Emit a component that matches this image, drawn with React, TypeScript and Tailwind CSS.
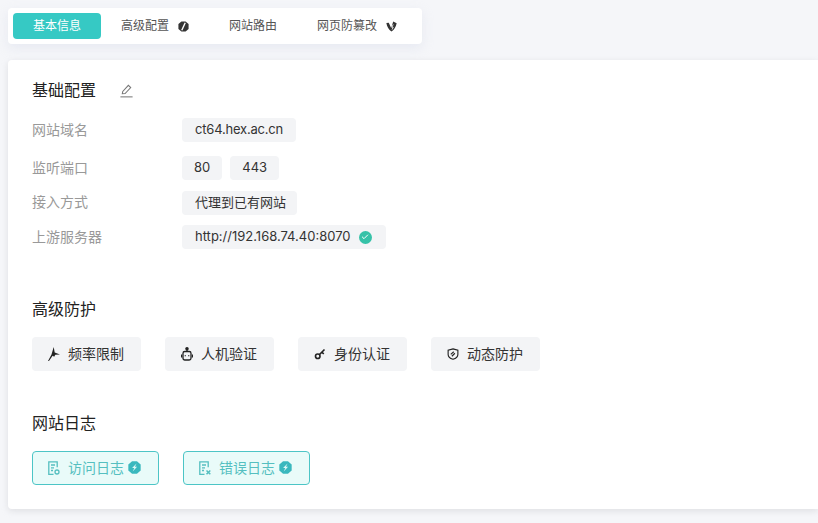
import React from "react";
import {Check} from "lucide-react";

const FONT = "font-['Inter','Noto_Sans_CJK_SC',sans-serif]";

const Bolt = ({className = ""}: {className?: string}) => (
  <svg viewBox="0 0 16 16" className={className} fill="currentColor">
    <path d="M5 .4h6L15.600 4.200v7.600L11 15.600H5L.4 11.800V4.200z" />
    <path d="M10.500 3 5 8.500h2.800L5.800 13 11.200 7.200H8.500z" fill="#dff7f5" />
  </svg>
);

const TabMark = () => (
  <svg viewBox="0 0 16 16" className="h-[11px] w-[11px] text-[#333]" fill="currentColor">
    <path d="M5 .6h6L15.400 4.500v7L11 15.400H5L.6 11.500v-7z" />
    <path d="M10.500 2.500 5.500 13.500" stroke="#fff" strokeWidth="2" fill="none" />
  </svg>
);

const TabShield = () => (
  <svg viewBox="0 0 16 16" className="h-[11px] w-[11px] text-[#333]" fill="currentColor">
    <path d="M.5 3 4 2.500 7.500 10 10.500.8l5 2.500C14.500 8.500 12 13 8 15.200 4 13 1.500 8.500.5 3z" />
    <path d="M10.500 5 8.500 9h2L8.800 12.500" stroke="#fff" strokeWidth="1.200" fill="none" />
  </svg>
);

const IconEdit = () => (
  <svg viewBox="0 0 16 16" className="h-[15px] w-[15px] text-[#777]" fill="none" stroke="currentColor" strokeWidth="1.100">
    <path d="M3.500 11.500 4 9l6-6.500 2.500 2.300-6 6.500z" />
    <path d="M1.500 14.800h13" />
  </svg>
);

const Chip = ({children, className = "px-[13px]"}: {children: React.ReactNode; className?: string}) => (
  <div className={`flex h-6 items-center gap-2 rounded-[4px] bg-[#f3f4f6] text-[13px] text-[#333] ${className}`}>{children}</div>
);

const Row = ({label, className, labelClass = "", children}: {label: string; className: string; labelClass?: string; children: React.ReactNode}) => (
  <div className={`flex items-center ${className}`}>
    <div className={`w-[150px] text-[14px] leading-5 text-[#999] ${labelClass}`}>{label}</div>
    <div className="flex gap-2">{children}</div>
  </div>
);

const Title = ({children, className = ""}: {children: React.ReactNode; className?: string}) => (
  <div className={`text-[16px] leading-6 text-[#222] ${className}`}>{children}</div>
);

const IconFreq = () => (
  <svg viewBox="0 0 12 14" className="h-[14px] w-3" fill="currentColor">
    <path d="M0 14 3.500 7.500 5.700 0l1 5.500L12 7.400 7.300 7.700 6.200 9.800 4.600 8.800 1 14z" />
  </svg>
);

const IconBot = () => (
  <svg viewBox="0 0 12 14" className="h-[14px] w-3" fill="none" stroke="currentColor" strokeWidth="1.300">
    <rect x="2" y="4.500" width="8" height="8.500" rx="1.800" />
    <circle cx="6" cy="1.800" r="1.100" fill="currentColor" />
    <path d="M6 2.500v2" />
    <path d="M.6 7.500v3M11.400 7.500v3" strokeWidth="1.200" />
    <path d="M4.300 8.300v1M7.700 8.300v1" />
  </svg>
);

const IconKey = () => (
  <svg viewBox="0 0 16 16" className="h-3 w-3" fill="none" stroke="currentColor" strokeWidth="2.200">
    <circle cx="5" cy="11" r="3" />
    <path d="M7 9l7-7M10.500 5.500l2.500 2.500" />
  </svg>
);

const IconShield = () => (
  <svg viewBox="0 0 16 16" className="h-[14px] w-3" fill="none" stroke="currentColor" strokeWidth="1.500">
    <path d="M8 1.200 14.500 3v5.500c0 3.200-3 5.300-6.500 6.500-3.500-1.200-6.500-3.300-6.500-6.500V3z" />
    <path d="M5 8.500 9 5M6.500 11l4-4" />
  </svg>
);

const IconLog = ({error}: {error?: boolean}) => (
  <svg viewBox="0 0 12 14" className="h-[14px] w-3" fill="none" stroke="currentColor" strokeWidth="1.300">
    <path d="M5.500 13.300H.8V.8h8.400v5.400" />
    <path d="M3 4h4M3 6.800h3M3 9.500h2" />
    {error ? <path d="M7.500 9.500l3.800 3.800M11.300 9.500l-3.800 3.800" strokeWidth="1.500" /> : <circle cx="9" cy="11" r="2" />}
  </svg>
);

const ActionButton = ({icon, label}: {icon: React.ReactNode; label: string}) => (
  <div className="flex h-[34px] w-[109px] items-center gap-2 rounded-[4px] bg-[#f3f4f6] pb-0.5 pl-4 text-[14px] text-[#333]">
    <span className="flex w-3 justify-center pt-0.5 text-[#222]">{icon}</span>
    {label}
  </div>
);

const LogButton = ({icon, label}: {icon: React.ReactNode; label: string}) => (
  <div className="flex h-[34px] w-[127px] items-center gap-2 rounded-[4px] border border-[#4cc5c6] bg-[#e9fbf9] pb-0.5 pl-[15px] text-[14px] text-[#55bfc0]">
    <span className="pt-0.5">{icon}</span>
    <span className="flex items-center gap-1">
      {label}
      <Bolt className="h-[13px] w-[13px] text-[#3ab8be]" />
    </span>
  </div>
);

export default function App() {
  return (
    <div className={`flex h-[523px] w-[818px] flex-col overflow-hidden bg-[#f5f6f9] pt-2 pl-2 ${FONT}`}>
      <div className="flex h-9 w-[414px] items-center rounded-[4px] bg-white pl-[5px] text-[12px] text-[#555] shadow-[0_4px_12px_rgba(200,205,225,0.3)]">
        <div className="flex h-[26px] w-[88px] items-center justify-center rounded-[4px] bg-[#36c9c4] text-white">基本信息</div>
        <div className="ml-5 flex items-center gap-[9px]">
          高级配置
          <TabMark />
        </div>
        <div className="ml-10">网站路由</div>
        <div className="ml-10 flex items-center gap-[9px]">
          网页防篡改
          <TabShield />
        </div>
      </div>

      <div className="mt-4 h-[449px] rounded-l-[4px] bg-white pt-[18px] pl-6 shadow-[0_2px_6px_rgba(190,190,195,0.4)]">
        <div className="flex items-center gap-[23px]">
          <Title>基础配置</Title>
          <IconEdit />
        </div>
        <Row label="网站域名" className="mt-4">
          <Chip className="px-[13px] tracking-[-0.2px]">ct64.hex.ac.cn</Chip>
        </Row>
        <Row label="监听端口" className="mt-3.5">
          <Chip className="px-3">80</Chip>
          <Chip className="px-3">443</Chip>
        </Row>
        <Row label="接入方式" className="mt-[11px]" labelClass="pb-0.5">
          <Chip className="pr-[11px] pl-[13px]">代理到已有网站</Chip>
        </Row>
        <Row label="上游服务器" className="mt-2.5">
          <Chip className="pr-[14px] pl-[13px]">
            http://192.168.74.40:8070
            <span className="flex h-[13px] w-[13px] items-center justify-center rounded-full bg-[#36c2a8]">
              <Check className="h-2 w-2 text-white" strokeWidth={3} />
            </span>
          </Chip>
        </Row>

        <Title className="mt-12">高级防护</Title>
        <div className="mt-4 flex gap-6">
          <ActionButton icon={<IconFreq />} label="频率限制" />
          <ActionButton icon={<IconBot />} label="人机验证" />
          <ActionButton icon={<IconKey />} label="身份认证" />
          <ActionButton icon={<IconShield />} label="动态防护" />
        </div>

        <Title className="mt-10">网站日志</Title>
        <div className="mt-4 flex gap-6">
          <LogButton icon={<IconLog />} label="访问日志" />
          <LogButton icon={<IconLog error />} label="错误日志" />
        </div>
      </div>
    </div>
  );
}
